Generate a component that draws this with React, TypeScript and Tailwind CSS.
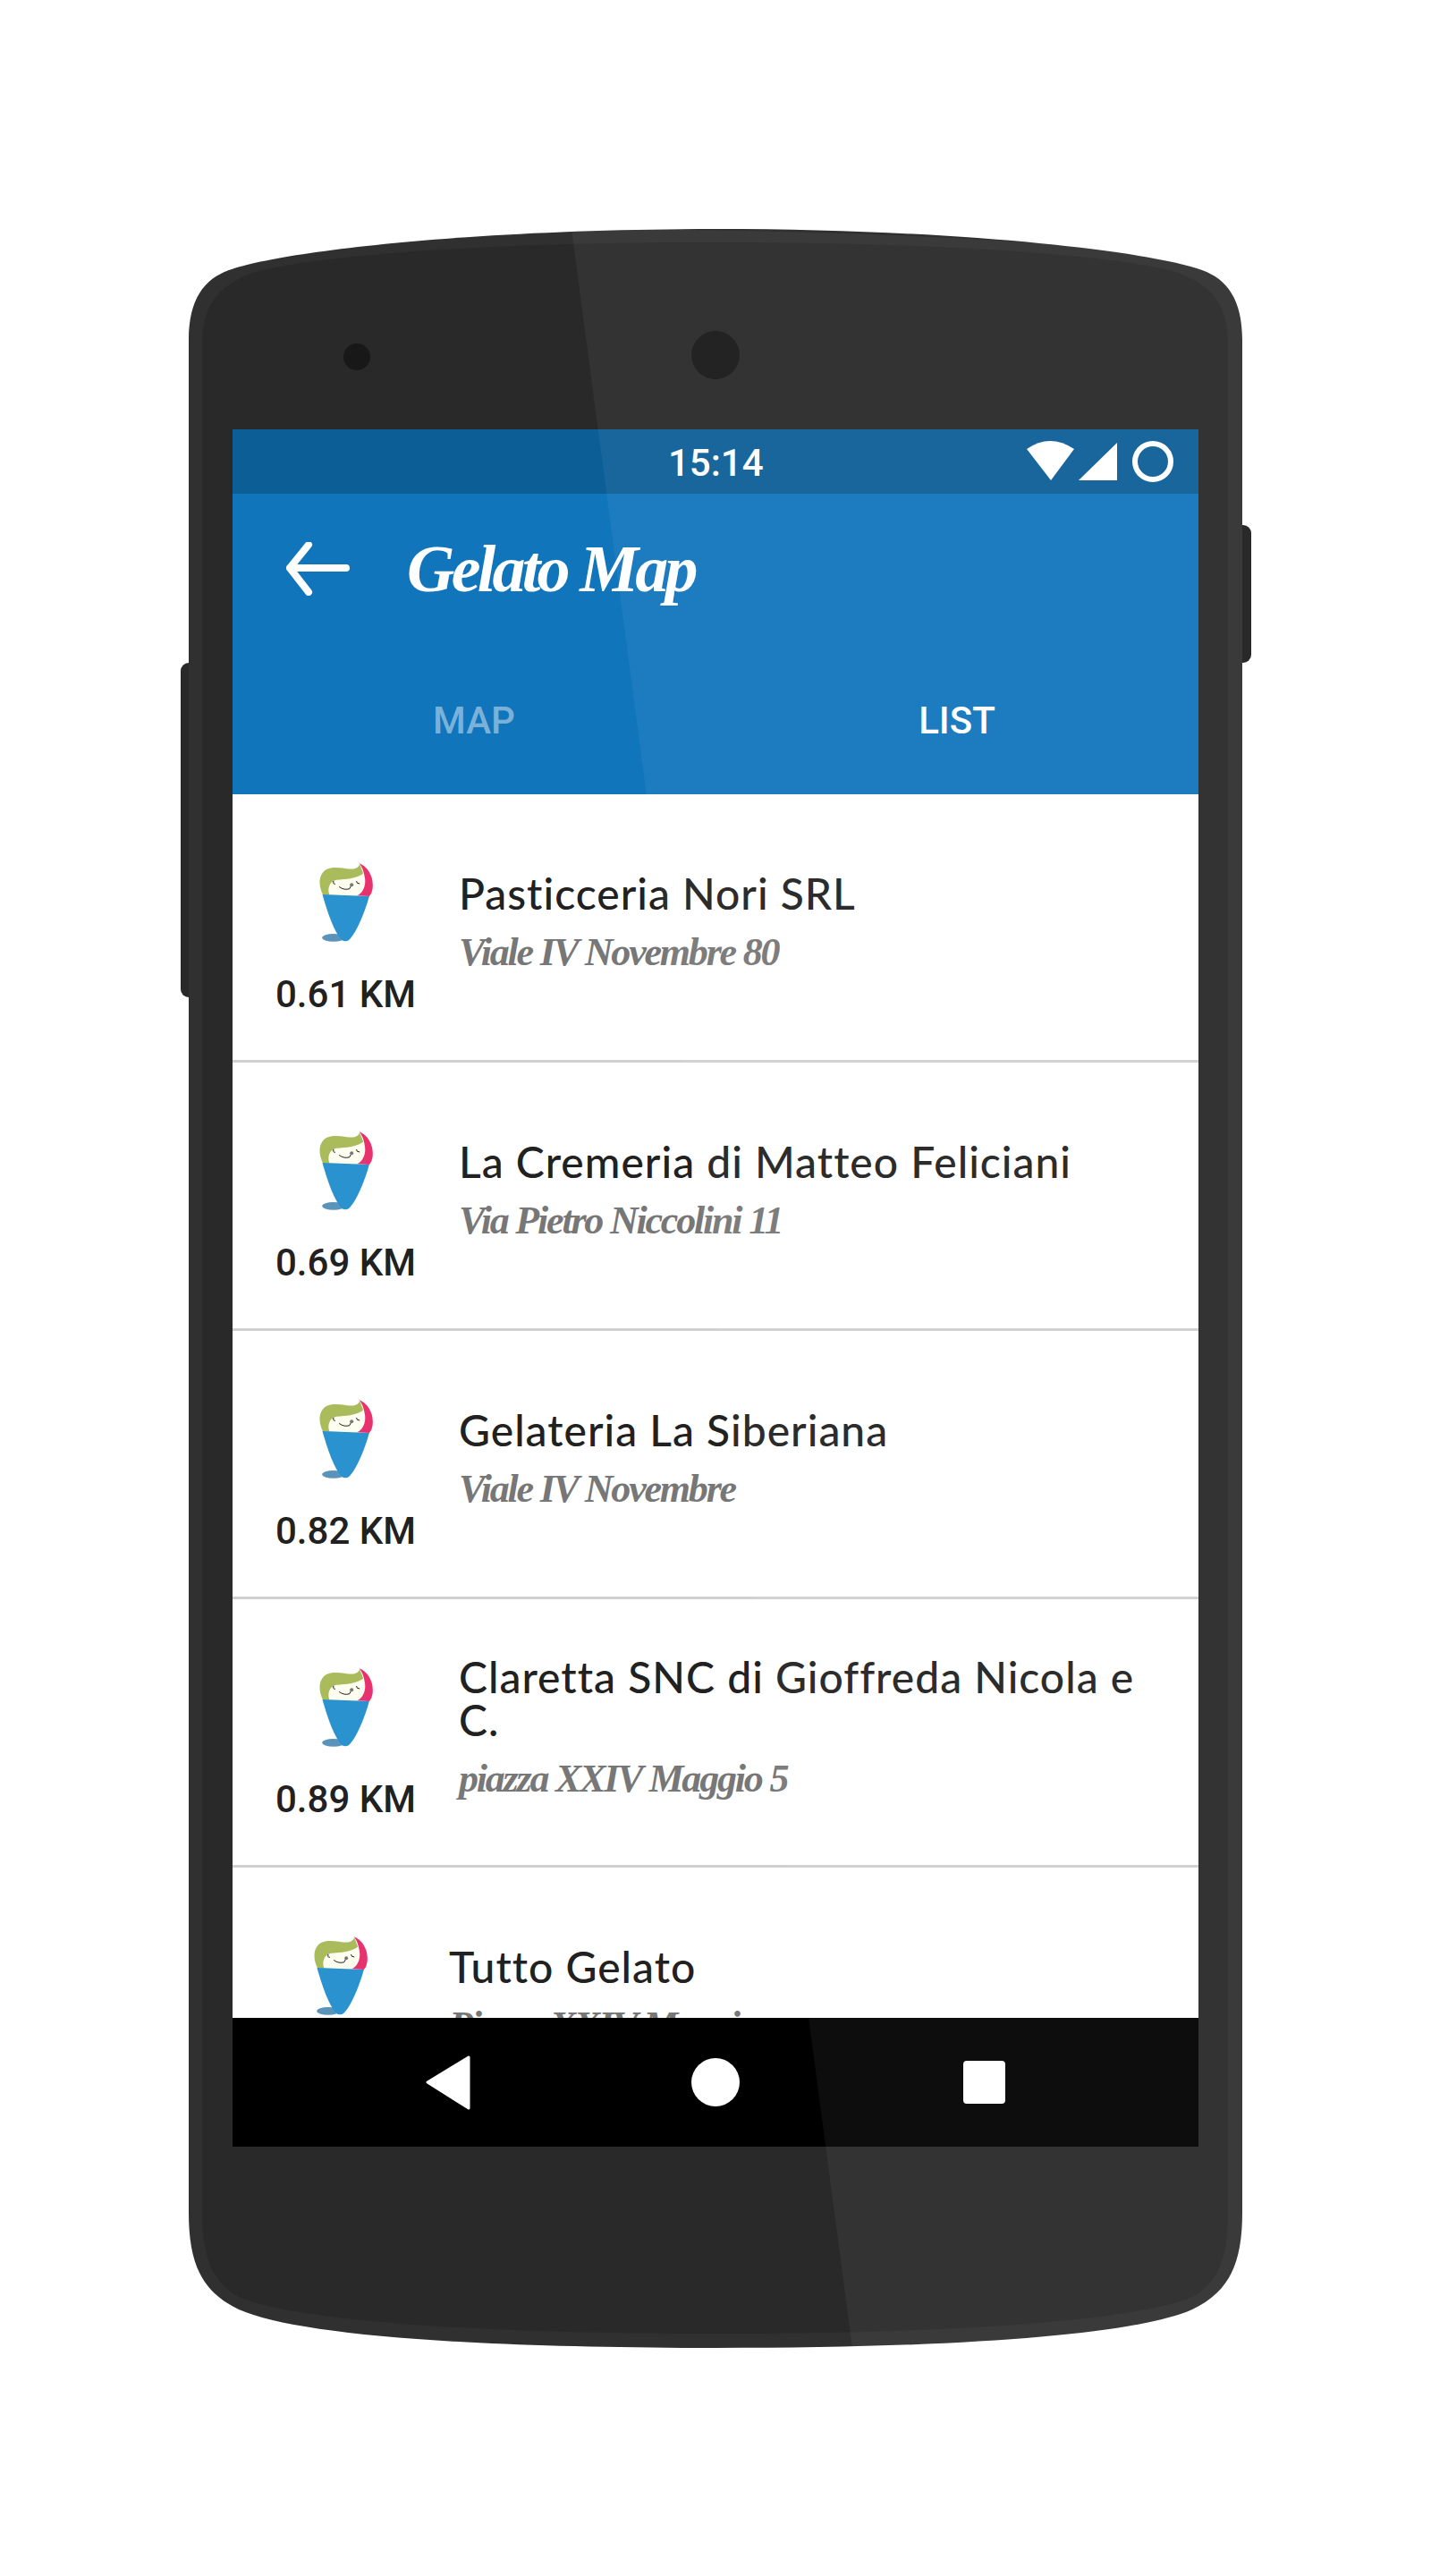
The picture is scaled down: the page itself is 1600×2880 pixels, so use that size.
const places = [
  { km: '0.61 KM', name: 'Pasticceria Nori SRL', address: 'Viale IV Novembre 80' },
  { km: '0.69 KM', name: 'La Cremeria di Matteo Feliciani', address: 'Via Pietro Niccolini 11' },
  { km: '0.82 KM', name: 'Gelateria La Siberiana', address: 'Viale IV Novembre' },
  { km: '0.89 KM', name: 'Claretta SNC di Gioffreda Nicola e C.', address: 'piazza XXIV Maggio 5' },
  { km: '', name: 'Tutto Gelato', address: 'Piazza XXIV Maggio' },
]

function Marker() {
  return (
    <svg viewBox="285 250 185 270" className="w-[62px] h-[90px] shrink-0">
      <ellipse cx="335" cy="503" rx="38" ry="13" fill="#5b94ba" />
      <path d="M300 360C284 330 284 292 310 275C340 258 385 277 405 272C418 268 423 262 422 254L440 300L430 360Z" fill="#a9bb5a" />
      <path d="M322 360C312 335 325 312 345 309C375 306 415 306 438 285L452 340L425 362Z" fill="#fdfdf0" />
      <path d="M422 254C450 265 472 300 466 340Q464 355 455 364L414 362C436 352 445 325 440 300C437 280 430 265 422 254Z" fill="#e8316f" />
      <path d="M298 358L455 364C440 420 410 490 386 512Q375 518 364 512C340 490 315 420 298 358Z" fill="#2a93cf" />
      <path d="M335 314v6q1 4 5 3M412 314q0 8 10 8M355 333q16 12 34 6l5-10" fill="none" stroke="#222" strokeWidth="3" strokeLinecap="round" />
      <circle cx="396" cy="326" r="6" fill="#777" />
    </svg>
  )
}

function PlaceRow({ km, name, address }: { km: string; name: string; address: string }) {
  return (
    <div className="flex items-center h-[300px] pl-12 pr-12 gap-12 border-b-[3px] border-[#d0d0d0] shrink-0">
      <div className={`flex flex-col items-center shrink-0 self-start pt-[76px] ${km ? 'w-[157px]' : 'w-[146px]'}`}>
        <Marker />
        <div className="mt-[34px] h-[48px] text-[42px] leading-[48px] font-medium text-[#212121] font-['Roboto',sans-serif] whitespace-nowrap">{km}</div>
      </div>
      <div className="flex flex-col min-w-0 pb-[3px]">
        <div className="text-[48px] leading-[48px] font-medium text-[#212121] font-['Lato',sans-serif] tracking-[1px]">{name}</div>
        <div className="mt-[12px] text-[44px] leading-[60px] font-bold italic text-[#777777] font-['Liberation_Serif',serif] tracking-[-2.2px] whitespace-nowrap">{address}</div>
      </div>
    </div>
  )
}

export default function App() {
  return (
    <div className="relative w-[1600px] h-[2880px] bg-white overflow-hidden pt-[480px] pl-[260px]">
      {/* phone shell */}
      <svg viewBox="0 0 1600 2880" className="absolute inset-0 w-[1600px] h-[2880px]">
        <rect x="202" y="741" width="30" height="374" rx="9" fill="#292929" />
        <rect x="1370" y="587" width="29" height="154" rx="9" fill="#292929" />
        <path d="M211 380C211 335 228 312 256 302C310 282 520 256 800 256C1080 256 1290 282 1344 302C1372 312 1389 335 1389 380V2473C1389 2530 1375 2562 1333 2582C1270 2610 1080 2625 800 2625C520 2625 330 2610 267 2582C225 2562 211 2530 211 2473Z" fill="#303030" />
        <path d="M226 385C226 340 245 320 280 306C340 286 540 271 800 271C1060 271 1260 286 1320 306C1355 320 1373 340 1373 385V2473C1373 2525 1362 2552 1333 2568C1270 2595 1060 2609 800 2609C540 2609 330 2595 267 2568C238 2552 226 2525 226 2473Z" fill="#292929" />
        <circle cx="399" cy="399" r="15" fill="#181818" />
        <circle cx="800" cy="397" r="27" fill="#181818" />
      </svg>

      {/* screen */}
      <div className="relative flex flex-col w-[1080px] h-[1920px] bg-white overflow-hidden">
        <div className="flex items-center h-[72px] shrink-0 bg-[#0c5e96] pl-[487px] pt-[3px]">
          <span className="text-[42px] font-medium text-white font-['Roboto',sans-serif] leading-none">15:14</span>
        </div>
        <div className="flex items-center h-[168px] shrink-0 bg-[#1175bc] px-[60px]">
          <svg viewBox="0 0 72 60" className="w-[72px] h-[60px] shrink-0">
            <path d="M25 3L4 29L25 56M4 29H67" fill="none" stroke="white" strokeWidth="8" strokeLinecap="round" strokeLinejoin="round" />
          </svg>
          <span className="ml-[63px] text-[74px] italic font-bold text-white font-['Liberation_Serif',serif] leading-none tracking-[-3.8px] whitespace-nowrap">Gelato Map</span>
        </div>
        <div className="flex h-[168px] shrink-0 bg-[#1175bc] pt-[2px]">
          <div className="flex-1 flex items-center justify-center text-[42px] font-medium text-white/45 font-['Roboto',sans-serif]">MAP</div>
          <div className="flex-1 flex items-center justify-center text-[42px] font-medium text-white font-['Roboto',sans-serif]">LIST</div>
        </div>
        <div className="flex flex-col flex-1 min-h-0 overflow-hidden">
          {places.map((place) => (
            <PlaceRow key={place.name} {...place} />
          ))}
        </div>
        <div className="flex items-center h-[144px] shrink-0 bg-black">
          <svg viewBox="0 0 1080 144" className="w-[1080px] h-[144px]">
            <path d="M264 44V101L218 72Z" fill="white" stroke="white" strokeWidth="3" strokeLinejoin="round" />
            <circle cx="540" cy="72" r="27" fill="white" />
            <rect x="817" y="48" width="47" height="48" rx="4" fill="white" />
          </svg>
        </div>
      </div>

      {/* status icons + glass reflection sit over the screen */}
      <svg viewBox="0 0 1600 2880" className="absolute inset-0 w-[1600px] h-[2880px] pointer-events-none">
        <path d="M1148 502Q1174 484 1201 502L1175 537Z" fill="white" />
        <path d="M1249 495V537H1206Z" fill="white" />
        <circle cx="1289" cy="516" r="20" fill="none" stroke="white" strokeWidth="6" />
        <path d="M639 256C780 256 1290 262 1344 302C1372 312 1389 335 1389 380V2473C1389 2530 1375 2562 1333 2582C1270 2610 1080 2625 953 2625Z" fill="white" fillOpacity="0.05" />
      </svg>
    </div>
  )
}
